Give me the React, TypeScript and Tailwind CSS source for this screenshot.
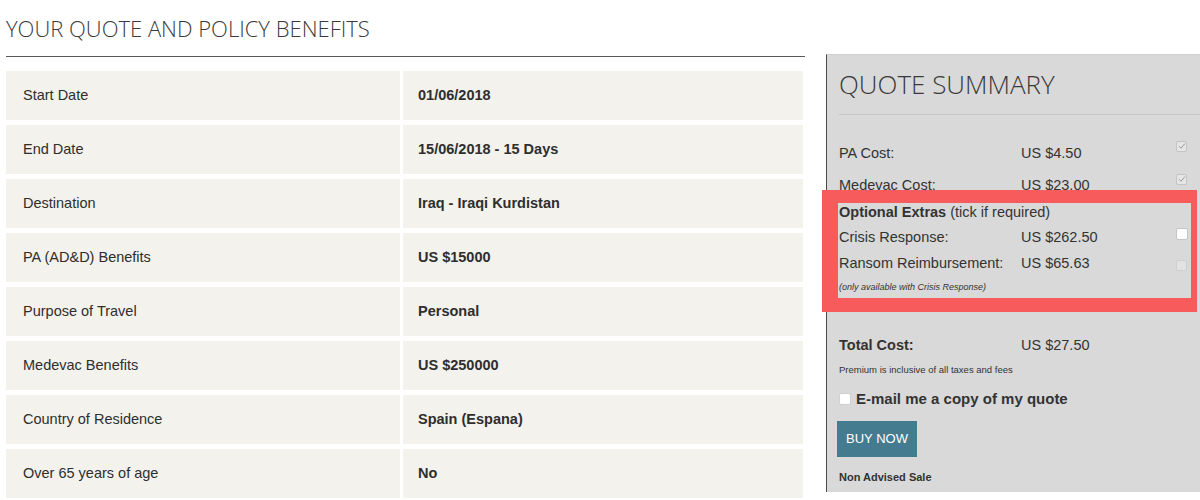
import React from "react";

const rows: [string, string][] = [
  ["Start Date", "01/06/2018"],
  ["End Date", "15/06/2018 - 15 Days"],
  ["Destination", "Iraq - Iraqi Kurdistan"],
  ["PA (AD&D) Benefits", "US $15000"],
  ["Purpose of Travel", "Personal"],
  ["Medevac Benefits", "US $250000"],
  ["Country of Residence", "Spain (Espana)"],
  ["Over 65 years of age", "No"],
];

function CheckedBox() {
  return (
    <span className="w-[11px] h-[11px] rounded-[2px] border border-[#c4c4c4] bg-[#e6e6e6] flex items-center justify-center">
      <svg width="8" height="8" viewBox="0 0 8 8">
        <path d="M1 4.2 L3 6.2 L7 1.5" stroke="#9a9a9a" strokeWidth="1" fill="none" />
      </svg>
    </span>
  );
}

function EmptyBox({ disabled }: { disabled?: boolean }) {
  return (
    <span
      className={
        disabled
          ? "block w-[11px] h-[11px] rounded-[2px] border border-[#cfcfcf] bg-[#e2e2e2]"
          : "block w-[12px] h-[12px] rounded-[2px] border border-[#c4c4c4] bg-white"
      }
    />
  );
}

export default function App() {
  return (
    <div
      className="relative w-[1200px] h-[500px] overflow-hidden bg-white text-[#333]"
      style={{ fontFamily: '"Liberation Sans", Arial, sans-serif' }}
    >
      <div className="flex">
        <div className="w-[805px] pl-[6px] shrink-0">
          <h1
            className="pt-[14px] text-[22px] leading-[28px] font-light text-[#3a3a3a]"
            style={{ fontFamily: '"Open Sans", sans-serif' }}
          >
            YOUR QUOTE AND POLICY BENEFITS
          </h1>
          <div className="mt-[14px] h-[1px] bg-[#5a5a5a] w-[799px]" />
          <div className="mt-[14px] flex flex-col gap-[5px] w-[797px]">
            {rows.map(([k, v]) => (
              <div key={k} className="flex h-[49px] gap-[3px]">
                <div className="w-[394px] bg-[#f3f2ec] flex items-center pl-[17px] text-[14.5px] text-[#2e2e2e]">
                  {k}
                </div>
                <div className="flex-1 bg-[#f3f2ec] flex items-center pl-[15px] text-[14.5px] font-bold text-[#2e2e2e]">
                  {v}
                </div>
              </div>
            ))}
          </div>
        </div>
        <div className="ml-[21px] mt-[54px] flex-1 h-[438px] bg-[#d9d9d9] border-l border-[#4a4a4a] border-t border-t-[#cfcfcf] pl-[12px]">
          <div
            className="pt-[11px] text-[26px] leading-[36px] font-light text-[#3a3a3a]"
            style={{ fontFamily: '"Open Sans", sans-serif' }}
          >
            QUOTE SUMMARY
          </div>
          <div className="mt-[12px] h-[1px] bg-[#c6c6c6]" />
          <div className="pt-[28px] text-[14.5px] text-[#333]">
            <div className="flex items-center h-[22px]">
              <span className="w-[182px]">PA Cost:</span>
              <span className="flex-1">US $4.50</span>
              <span className="mr-[13px] -mt-[16px]"><CheckedBox /></span>
            </div>
            <div className="flex items-center h-[22px] mt-[10px]">
              <span className="w-[182px]">Medevac Cost:</span>
              <span className="flex-1">US $23.00</span>
              <span className="mr-[13px] -mt-[14px]"><CheckedBox /></span>
            </div>
            <div className="h-[20px] mt-[6px] flex items-center">
              <span className="font-bold">Optional Extras</span>
              <span>&nbsp;(tick if required)</span>
            </div>
            <div className="flex items-center h-[22px] mt-[4px]">
              <span className="w-[182px]">Crisis Response:</span>
              <span className="flex-1">US $262.50</span>
              <span className="mr-[12px] -mt-[8px]"><EmptyBox /></span>
            </div>
            <div className="flex items-center h-[22px] mt-[4px]">
              <span className="w-[182px]">Ransom Reimbursement:</span>
              <span className="flex-1">US $65.63</span>
              <span className="mr-[13px] mt-[2px]"><EmptyBox disabled /></span>
            </div>
            <div className="text-[9px] italic h-[14px] mt-[5px] leading-[14px]">
              (only available with Crisis Response)
            </div>
            <div className="flex items-center h-[22px] mt-[41px]">
              <span className="w-[182px] font-bold">Total Cost:</span>
              <span className="flex-1">US $27.50</span>
            </div>
            <div className="text-[9.5px] h-[14px] leading-[14px] mt-[6px]">
              Premium is inclusive of all taxes and fees
            </div>
            <div className="flex items-center h-[22px] mt-[11px] gap-[5px]">
              <span className="w-[12px] h-[12px] rounded-[2px] bg-white border border-[#d0d0d0]" />
              <span className="font-bold text-[15px]">E-mail me a copy of my quote</span>
            </div>
            <div className="mt-[11px]">
              <button className="w-[80px] h-[36px] bg-[#457b8f] text-white text-[13px] -ml-[2px]">
                BUY NOW
              </button>
            </div>
            <div className="mt-[12px] text-[11px] font-bold">Non Advised Sale</div>
          </div>
        </div>
      </div>
      <div className="absolute left-[822px] top-[190px] w-[375px] h-[122px] border-[#f75b5b] border-t-[13px] border-l-[16px] border-b-[14px] border-r-[6px]" />
    </div>
  );
}
